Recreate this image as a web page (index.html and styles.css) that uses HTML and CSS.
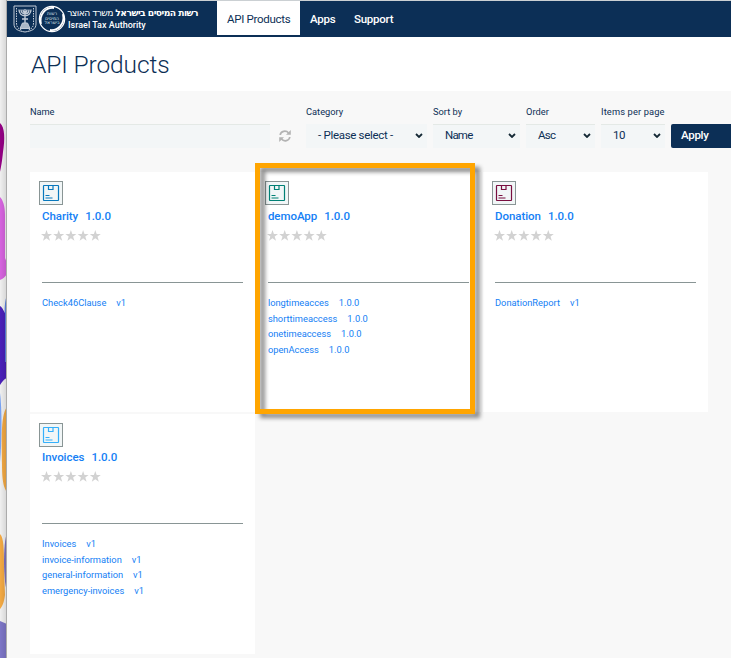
FILE: index.html
```html
<!DOCTYPE html>
<html lang="en">
<head>
<meta charset="utf-8">
<title>API Products</title>
<link rel="stylesheet" href="styles.css">
</head>
<body>
<svg class="defs" width="0" height="0" aria-hidden="true">
  <symbol id="box" viewBox="0 0 22 22"><rect x="3.500" y="3.500" width="15" height="15" rx=".5"/><path d="M8.500 3.500v4h4.500v-4M5.500 13.500h4M5.500 16h7"/></symbol>
  <symbol id="stars" viewBox="0 0 60 11"><path id="star" d="M5.500 0l1.400 3.900H11L7.700 6.500 9 10.700 5.500 8.200 2 10.700l1.300-4.200L0 3.900h4.100z"/><use href="#star" x="12.200"/><use href="#star" x="24.400"/><use href="#star" x="36.600"/><use href="#star" x="48.800"/></symbol>
</svg>
<div class="window">
  <svg class="edge" width="7" height="658" viewBox="0 0 7 658">
    <defs>
      <linearGradient id="shade"><stop offset="0" stop-color="#000" stop-opacity="0"/><stop offset="1" stop-color="#000" stop-opacity=".1"/></linearGradient>
    </defs>
    <path fill="#f0f0f0" d="M0 0h7v658H0z"/>
    <g class="blobs">
      <path fill="#930083" d="M-2 122l2 1c5 4 5 17 3 29-1 10-2 15-3 20h-2z"/>
      <path fill="#d663df" d="M-2 196l2 1c3 3 5 9 5 18v43l2 5v11c-2 3-4 5-7 6h-2z"/>
      <path fill="#5b84df" d="M9 293l-2 2c-2 5-3 13-2 27v48h4z"/>
      <path fill="#4a20b9" d="M-2 306h2c3 2 4 6 5 7v49h4v16H7c-3 1-5 4-7 7h-2z"/>
      <path fill="#78a2f2" d="M-2 393h2c2 15 2 47 0 69h-2z"/>
      <path fill="#f3a943" d="M9 406l-2 1c-7 8-5 40-5 57 0 18 2 24 5 28h2z"/>
      <path fill="#7d72bd" d="M9 533H7c-4 9-4 48 0 58h2z"/>
      <path fill="#f3a943" d="M-2 534h2c4 4 4 16 4 34l1 27c-1 8-3 12-5 14h-2z"/>
      <path fill="#7d76c7" d="M-2 621h2l7 3h2v36H-2z"/>
    </g>
    <path fill="url(#shade)" d="M0 0h6v658H0z"/>
    <path fill="#ababab" d="M6 0h1v658H6z"/>
  </svg>
  <main class="portal">
    <header class="topbar">
      <svg class="emblem" width="24" height="28" viewBox="0 0 24 28">
        <path d="M1 1h22v18c0 5-4 7-11 8C5 26 1 24 1 19z"/>
        <path d="M3.500 3v15c0 4 2 6 5 7M20.500 3v15c0 4-2 6-5 7" stroke-dasharray="1.500 1"/>
        <path d="M6 4.500c0 8.500 12 8.500 12 0M8 4.500c0 6 8 6 8 0M10 4.500c0 4 4 4 4 0M12 4v16M9 14h6" stroke-width="1.400"/>
        <path d="M9.500 18l-2.500 5.500h10L14.500 18z" fill="#aab7c6"/>
      </svg>
      <div class="seal">
        <svg width="28" height="28" viewBox="0 0 28 28"><circle cx="14" cy="14" r="12.600"/><path d="M3 19C1 9 8 2 16 3M25 9c2 10-5 17-13 16" stroke-width="1.800"/></svg>
        <span class="seal-text" dir="rtl">רשות<br>המיסים<br>בישראל</span>
      </div>
      <div class="brand">
        <div class="brand-he" dir="rtl"><b>רשות המיסים בישראל</b> משרד האוצר</div>
        <div class="brand-en">Israel Tax Authority</div>
      </div>
      <nav class="nav"><a class="active">API Products</a><a class="apps">Apps</a><a class="support">Support</a></nav>
    </header>
    <div class="heading"><h1>API Products</h1></div>
    <form class="filters">
      <label class="field name"><span class="label">Name</span><span class="control"></span></label>
      <svg class="refresh" width="12" height="12" viewBox="0 0 12 12"><path d="M1.200 5C1.700 1 7 0 9.600 3M10.800 7c-.5 4-5.800 5-8.400 2" fill="none" stroke="#b3b3b3" stroke-width="1.700"/><path d="M11.800 0v4.800H7zM.2 12V7.200H5z" fill="#b3b3b3"/></svg>
      <label class="field category"><span class="label">Category</span><span class="control"><span class="value">- Please select -</span><svg class="chev" viewBox="0 0 8 5"><path d="M1 1l3 3 3-3"/></svg></span></label>
      <label class="field sort"><span class="label">Sort by</span><span class="control"><span class="value">Name</span><svg class="chev" viewBox="0 0 8 5"><path d="M1 1l3 3 3-3"/></svg></span></label>
      <label class="field order"><span class="label">Order</span><span class="control"><span class="value">Asc</span><svg class="chev" viewBox="0 0 8 5"><path d="M1 1l3 3 3-3"/></svg></span></label>
      <label class="field items"><span class="label">Items per page</span><span class="control"><span class="value">10</span><svg class="chev" viewBox="0 0 8 5"><path d="M1 1l3 3 3-3"/></svg></span></label>
      <span class="apply">Apply</span>
    </form>
    <section class="products">
      <article class="card charity">
        <svg class="icon"><use href="#box"/></svg>
        <h2><span>Charity</span><span>1.0.0</span></h2>
        <svg class="stars"><use href="#stars"/></svg>
        <ul><li><span>Check46Clause</span><span>v1</span></li></ul>
      </article>
      <article class="card demo">
        <svg class="icon"><use href="#box"/></svg>
        <h2><span>demoApp</span><span>1.0.0</span></h2>
        <svg class="stars"><use href="#stars"/></svg>
        <ul><li><span>longtimeacces</span><span>1.0.0</span></li><li><span>shorttimeaccess</span><span>1.0.0</span></li><li><span>onetimeaccess</span><span>1.0.0</span></li><li><span>openAccess</span><span>1.0.0</span></li></ul>
        <div class="highlight"></div>
      </article>
      <article class="card donation">
        <svg class="icon"><use href="#box"/></svg>
        <h2><span>Donation</span><span>1.0.0</span></h2>
        <svg class="stars"><use href="#stars"/></svg>
        <ul><li><span>DonationReport</span><span>v1</span></li></ul>
      </article>
      <article class="card invoices">
        <svg class="icon"><use href="#box"/></svg>
        <h2><span>Invoices</span><span>1.0.0</span></h2>
        <svg class="stars"><use href="#stars"/></svg>
        <ul><li><span>Invoices</span><span>v1</span></li><li><span>invoice-information</span><span>v1</span></li><li><span>general-information</span><span>v1</span></li><li><span>emergency-invoices</span><span>v1</span></li></ul>
      </article>
    </section>
  </main>
</div>
</body>
</html>
```
FILE: styles.css
```css
* { box-sizing: border-box; }
body { margin: 0; width: 731px; height: 658px; overflow: hidden; background: #f8f8f8; color: #0c2f56; font-family: Roboto, "Liberation Sans", sans-serif; }
.defs { position: absolute; }
.window { display: grid; grid-template-columns: 7px 724px; height: 658px; }
.edge { display: block; }
.blobs { filter: blur(.6px); }
.portal { min-width: 0; background: #f8f8f8; }
.topbar { height: 37px; border-top: 1px solid #cbd0d3; background: #0c2f56; color: #fff; display: flex; align-items: flex-start; }
.emblem { margin: 4px 0 0 6px; fill: none; stroke: #c3ccd7; stroke-width: 1; flex: none; }
.seal { width: 28px; height: 28px; margin: 4px 0 0 1px; display: grid; flex: none; }
.seal > * { grid-area: 1 / 1; }
.seal svg { fill: none; stroke: #fff; stroke-width: 1.3; }
.seal-text { align-self: center; justify-self: center; text-align: center; font: 4.600px/4.600px "DejaVu Sans", sans-serif; color: #dbe1e8; }
.brand { width: 132px; margin-left: 3px; flex: none; white-space: nowrap; }
.brand-he { width: 129px; margin-top: 6px; font: 9.200px/12px "DejaVu Sans", sans-serif; letter-spacing: -.54px; }
.brand-en { margin-left: -1px; font-size: 9px; line-height: 13px; font-weight: 500; }
.nav { display: flex; margin-left: 16px; font-size: 11.5px; line-height: 36px; font-weight: 500; white-space: nowrap; }
.active { width: 83px; height: 34px; background: #fff; color: #0c2f56; padding-left: 10px; font-weight: 400; letter-spacing: -.3px; }
.apps { margin-left: 10px; width: 44px; letter-spacing: -.2px; }
.support { letter-spacing: -.25px; }
.heading { height: 54px; background: #fff; padding-left: 24px; }
h1 { margin: 0; font-size: 24.5px; line-height: 55px; font-weight: 300; letter-spacing: -.1px; white-space: nowrap; }
.filters { display: flex; align-items: flex-end; height: 57px; padding: 0 0 0 23px; }
.field { display: flex; flex-direction: column; height: 42px; flex: none; }
.label { font-size: 9.3px; line-height: 12px; height: 18px; white-space: nowrap; }
.name .label { letter-spacing: -.1px; }
.items .label { letter-spacing: .13px; }
.control { height: 24px; background: #f3f6f7; border-top: 1px solid #e4e9e6; display: flex; justify-content: space-between; align-items: center; padding: 0 4px 3px 12px; font-size: 11.5px; line-height: 20px; white-space: nowrap; }
.chev { width: 8px; height: 5px; margin-bottom: -1px; fill: none; stroke: #152935; stroke-width: 1.8; }
.name { width: 240px; }
.refresh { margin: 0 0 6px 9px; flex: none; }
.category { width: 121px; margin-left: 15px; }
.category .control { border-color: #f3f6f7; }
.category .value { letter-spacing: -.3px; }
.sort { width: 87px; margin-left: 6px; }
.sort .value { letter-spacing: -.8px; }
.order { width: 69px; margin-left: 6px; }
.order .value { letter-spacing: -.7px; }
.items { width: 64px; margin-left: 6px; }
.items .value { letter-spacing: -.5px; }
.apply { margin-left: 6px; height: 24px; flex: 1; background: #0c2f56; color: #fff; border-radius: 2px 0 0 2px; font-size: 11.5px; line-height: 23px; font-weight: 500; padding-left: 10px; letter-spacing: -.3px; }
.products { margin: 24px 0 0 23px; width: 678px; display: grid; grid-template-columns: repeat(3, 225px); grid-auto-rows: 240px; gap: 2px 1.5px; }
.card { position: relative; background: #fff; padding: 9px 12px 0; }
.icon { display: block; width: 24px; height: 24px; margin-left: -3px; background: #f1f6f7; border: 1px solid #899595; fill: none; stroke: var(--accent); stroke-width: 1.2; }
.charity { --accent: #0878bd; }
.demo { --accent: #008075; margin-left: -.6px; margin-right: .6px; }
.donation { --accent: #790f40; }
.invoices { --accent: #35b0fb; }
h2 { margin: 2px 0 0; height: 19px; display: flex; gap: 7px; color: #1480f5; font-size: 11.5px; line-height: 19px; font-weight: 500; letter-spacing: -.05px; white-space: nowrap; }
.invoices h2 { margin-top: 1px; }
.stars { display: block; width: 60px; height: 11px; margin: 4px 0 0 -1px; fill: #d2d2d2; }
ul { list-style: none; margin: 41px 0 0; padding: 12px 0 0; border-top: 1px solid #899595; color: #1480f5; font-size: 9.3px; }
li { display: flex; gap: 10px; height: 15.7px; line-height: 16px; white-space: nowrap; }
.highlight { position: absolute; left: -.9px; top: -9px; width: 220px; height: 251px; border: 5px solid #ffa500; filter: drop-shadow(5px 4px 2px rgba(0,0,0,.45)); z-index: 2; pointer-events: none; }
```
